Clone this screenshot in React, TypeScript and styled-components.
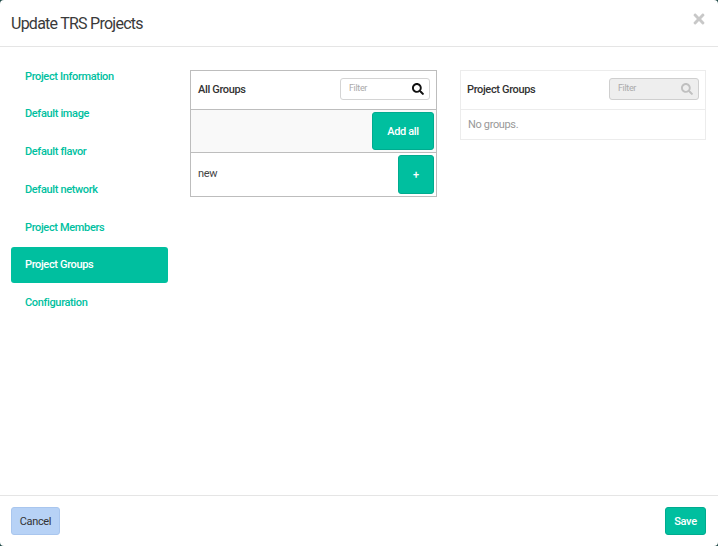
import React from "react";
import styled, { createGlobalStyle } from "styled-components";
import { FaSearch, FaTimes } from "react-icons/fa";

const GlobalStyle = createGlobalStyle`
  html, body {
    margin: 0;
    padding: 0;
    background: #1f4a46;
  }
`;

const Modal = styled.div`
  display: flex;
  flex-direction: column;
  width: 718px;
  height: 546px;
  overflow: hidden;
  box-sizing: border-box;
  background: #fff;
  border-radius: 4px;
  color: #333;
  font-family: "Roboto", "Liberation Sans", sans-serif;
  font-size: 11px;
  letter-spacing: -0.35px;
`;

const Header = styled.div`
  display: flex;
  align-items: center;
  justify-content: space-between;
  height: 46px;
  padding: 0 11px;
  border-bottom: 1px solid #e5e5e5;
`;

const Title = styled.h4`
  margin: 0;
  font-size: 16px;
  font-weight: 400;
  letter-spacing: -0.75px;
  color: #3a3a3a;
`;

const Close = styled.span`
  display: flex;
  margin-top: -9px;
  color: #c8c8c8;
  font-size: 16px;
`;

const Body = styled.div`
  display: flex;
  flex: 1;
  padding: 11px 12px 0 11px;
`;

const Nav = styled.div`
  display: flex;
  flex-direction: column;
  width: 157px;
  margin-right: 22px;
`;

const NavItem = styled.div<{ $active?: boolean }>`
  display: flex;
  align-items: center;
  height: 36px;
  margin-bottom: 1.8px;
  padding-left: 14px;
  border-radius: 3px;
  font-weight: 500;
  color: ${(p) => (p.$active ? "#fff" : "#00bfa0")};
  background: ${(p) => (p.$active ? "#00bf9f" : "transparent")};
`;

const Panes = styled.div`
  display: flex;
  flex: 1;
  align-items: flex-start;
  padding-top: 12px;
  gap: 23px;
`;

const Pane = styled.div<{ $width: number; $line: string }>`
  width: ${(p) => p.$width}px;
  box-sizing: border-box;
  border: 1px solid ${(p) => p.$line};
`;

const PaneHead = styled.div<{ $line: string; $inset: number }>`
  display: flex;
  align-items: center;
  justify-content: space-between;
  height: 39px;
  padding: 0 6px 2px ${(p) => p.$inset}px;
  box-sizing: border-box;
  border-bottom: 1px solid ${(p) => p.$line};
  font-weight: 500;
  color: #333;
`;

const Filter = styled.div<{ $disabled?: boolean }>`
  display: flex;
  align-items: center;
  justify-content: space-between;
  box-sizing: border-box;
  width: 90px;
  height: 22px;
  padding: 0 5px 0 8px;
  border: 1px solid ${(p) => (p.$disabled ? "#cfcfcf" : "#d4d4d4")};
  border-radius: 3px;
  background: ${(p) => (p.$disabled ? "#eeeeee" : "#fff")};
  color: ${(p) => (p.$disabled ? "#c0c0c0" : "#111")};
  font-size: 12px;
`;

const FilterHint = styled.span`
  margin-top: -3px;
  font-size: 9px;
  font-weight: 400;
  color: #aaa;
`;

const AddAllRow = styled.div`
  display: flex;
  justify-content: flex-end;
  box-sizing: border-box;
  height: 43px;
  padding: 2px;
  background: #f9f9f9;
  border-bottom: 1px solid #bdbdbd;
`;

const GroupRow = styled.div`
  display: flex;
  align-items: center;
  justify-content: space-between;
  height: 43px;
  padding: 2px 2px 2px 7px;
  box-sizing: border-box;
  color: #444;
  font-weight: 400;
`;

const GroupName = styled.span`
  margin-top: -2px;
`;

const Button = styled.button<{ $width: number; $height: number; $tone?: "primary" | "cancel" }>`
  width: ${(p) => p.$width}px;
  height: ${(p) => p.$height}px;
  padding: 0;
  border: 1px solid ${(p) => (p.$tone === "cancel" ? "#a9c6ee" : "#00ab8f")};
  border-radius: 3px;
  background: ${(p) => (p.$tone === "cancel" ? "#b7d2f6" : "#00bf9f")};
  color: ${(p) => (p.$tone === "cancel" ? "#333" : "#fff")};
  font-family: inherit;
  font-size: 11px;
  letter-spacing: -0.35px;
  font-weight: ${(p) => (p.$tone === "cancel" ? 400 : 500)};
`;

const EmptyNote = styled.div`
  display: flex;
  align-items: center;
  height: 29px;
  padding-left: 7px;
  color: #999;
`;

const Footer = styled.div`
  display: flex;
  align-items: center;
  justify-content: space-between;
  height: 50px;
  padding: 0 12px 0 11px;
  border-top: 1px solid #e5e5e5;
`;

const navItems = [
  "Project Information",
  "Default image",
  "Default flavor",
  "Default network",
  "Project Members",
  "Project Groups",
  "Configuration",
];

export default function App() {
  return (
    <Modal>
      <GlobalStyle />
      <Header>
        <Title>Update TRS Projects</Title>
        <Close>
          <FaTimes />
        </Close>
      </Header>
      <Body>
        <Nav>
          {navItems.map((item) => (
            <NavItem key={item} $active={item === "Project Groups"}>
              {item}
            </NavItem>
          ))}
        </Nav>
        <Panes>
          <Pane $width={247} $line="#bdbdbd">
            <PaneHead $line="#bdbdbd" $inset={7}>
              All Groups
              <Filter>
                <FilterHint>Filter</FilterHint>
                <FaSearch />
              </Filter>
            </PaneHead>
            <AddAllRow>
              <Button $width={62} $height={38}>
                Add all
              </Button>
            </AddAllRow>
            <GroupRow>
              <GroupName>new</GroupName>
              <Button $width={36} $height={39}>
                +
              </Button>
            </GroupRow>
          </Pane>
          <Pane $width={246} $line="#ececec">
            <PaneHead $line="#ececec" $inset={6}>
              Project Groups
              <Filter $disabled>
                <FilterHint>Filter</FilterHint>
                <FaSearch />
              </Filter>
            </PaneHead>
            <EmptyNote>No groups.</EmptyNote>
          </Pane>
        </Panes>
      </Body>
      <Footer>
        <Button $width={49} $height={28} $tone="cancel">
          Cancel
        </Button>
        <Button $width={41} $height={28}>
          Save
        </Button>
      </Footer>
    </Modal>
  );
}
